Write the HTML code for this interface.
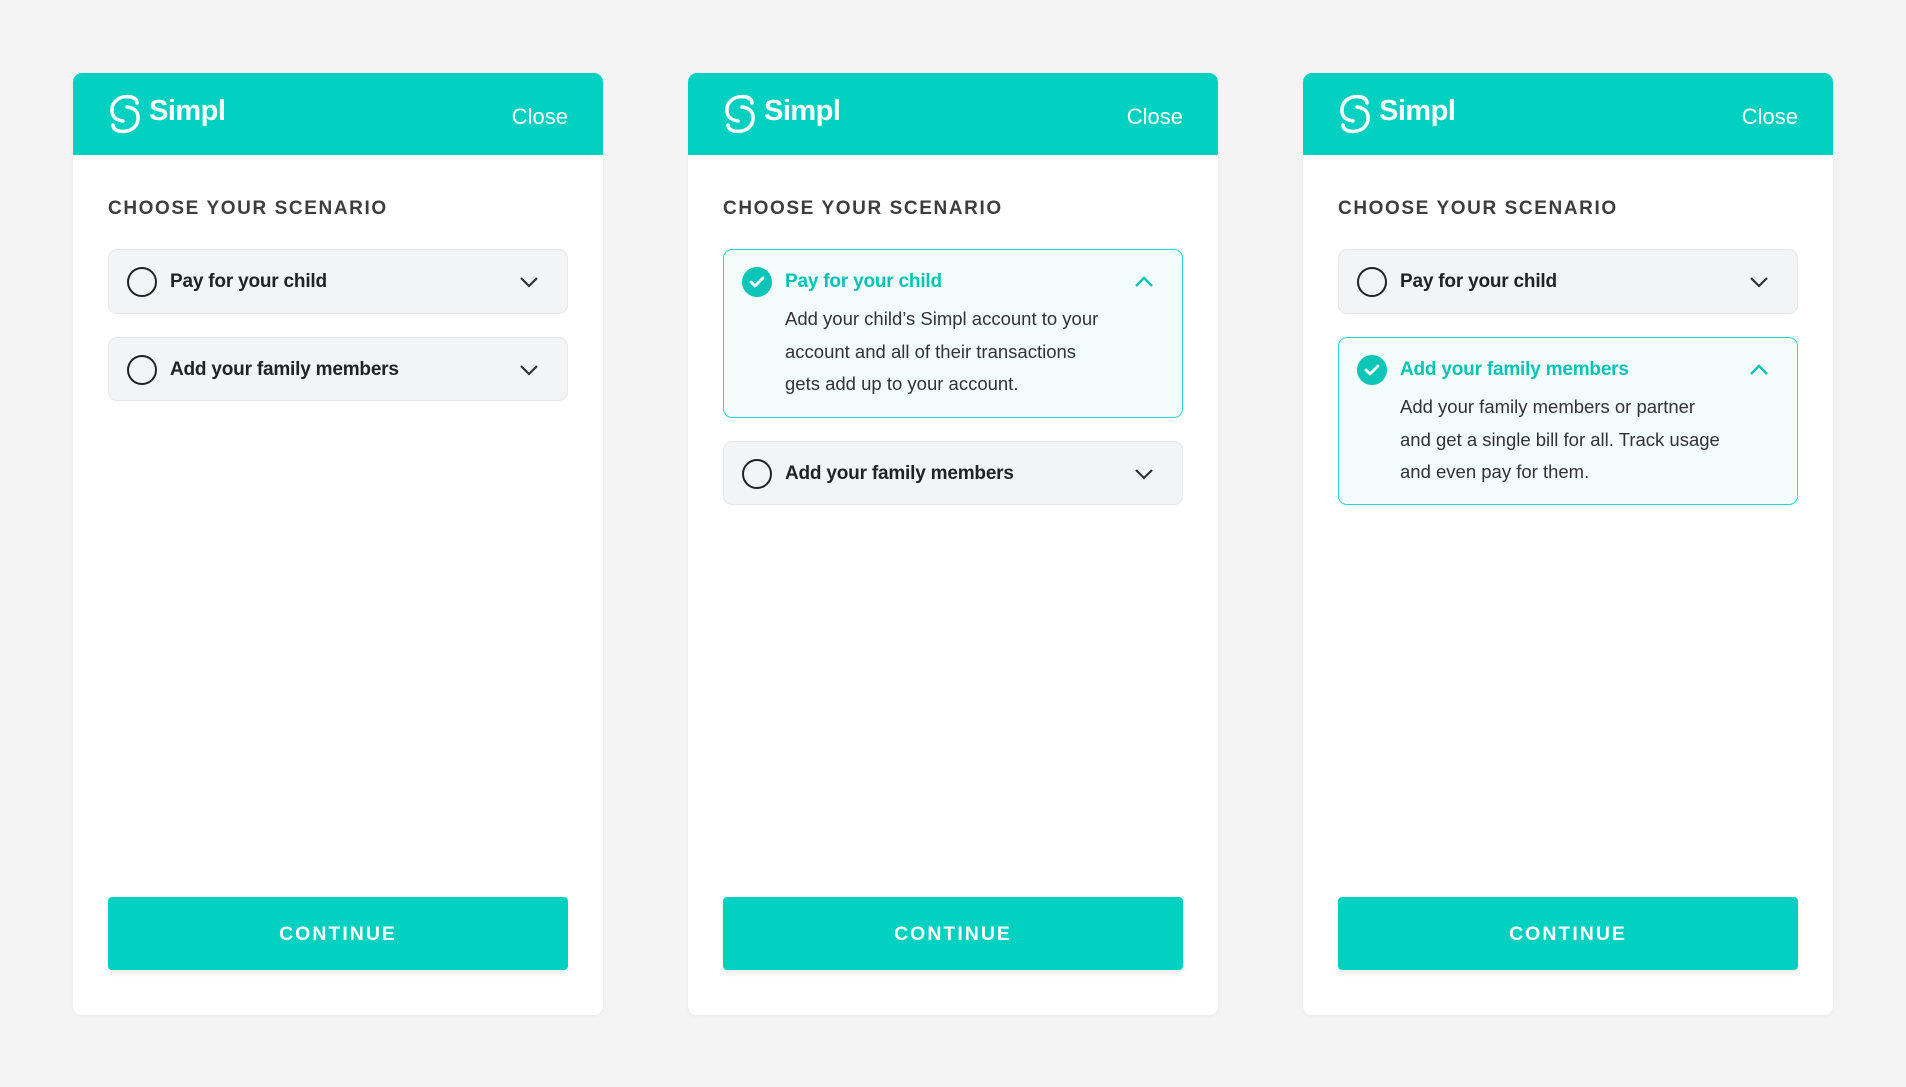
<!DOCTYPE html>
<html><head><style>
*{box-sizing:border-box;margin:0;padding:0}
body{width:1906px;height:1087px;background:#f4f4f5;font-family:"Liberation Sans",sans-serif;position:relative;overflow:hidden}
.card{position:absolute;top:73px;width:530px;height:942px;background:#fff;border-radius:9px;overflow:hidden;box-shadow:0 1px 4px rgba(0,0,0,.04)}
.hd{height:82px;background:#02d1c1;position:relative;color:#fff}
.logo{position:absolute;left:34px;top:19px}
.brand{position:absolute;left:76px;top:22px;font-size:29px;font-weight:bold;letter-spacing:-.5px}
.close{position:absolute;right:35px;top:31px;font-size:22px}
.h{position:absolute;left:35px;top:125px;font-size:19px;letter-spacing:1.6px;color:#3d3d3d;font-weight:bold}
.row{position:absolute;left:35px;width:460px;background:#f3f4f6;border:1px solid #e7e8ea;border-radius:9px}
.row.on{background:#f2fcfb;border:1.5px solid #2ad8cb}
.rad{position:absolute;left:18px;top:17px;width:30px;height:30px;border:2px solid #222;border-radius:50%}
.chk{position:absolute;left:18px;top:17px;width:30px;height:30px;border-radius:50%;background:#0bc5b7}
.lab{position:absolute;left:61px;top:21px;font-size:19px;font-weight:bold;color:#222;white-space:nowrap;letter-spacing:-.2px}
.on .lab{color:#09c3b5}
.chev{position:absolute;right:28px;top:25px}
.desc{position:absolute;left:61px;top:53px;font-size:18.5px;line-height:32.5px;color:#333;width:325px}
.btn{position:absolute;left:35px;top:824px;width:460px;height:73px;background:#02d1c1;border-radius:4px;color:#fff;font-size:19.5px;font-weight:bold;letter-spacing:2px;text-align:center;line-height:75px;box-shadow:0 3px 6px rgba(0,0,0,.08)}
</style></head><body>

<div class="card" style="left:73px">
 <div class="hd">
  <svg class="logo" width="36" height="44" viewBox="0 0 36 44"><g fill="none" stroke="#fff" stroke-width="3.5" stroke-linecap="round"><path d="M24 5C12 3 4 10 5 20c1 6 5 8 11 9"/><path d="M12 39c12 2 20-5 19-15-1-6-5-8-11-9"/><path d="M24 5c4 1 6 3 6 6"/><path d="M12 39c-4-1-6-3-6-6"/></g></svg>
  <div class="brand">Simpl</div><div class="close">Close</div>
 </div>
 <div class="h">CHOOSE YOUR SCENARIO</div>
 <div class="row" style="top:176px;height:65px"><div class="rad"></div><div class="lab">Pay for your child</div>
  <svg class="chev" width="20" height="14" viewBox="0 0 20 14"><path d="M2 3l8 8 8-8" fill="none" stroke="#333" stroke-width="2.2"/></svg></div>
 <div class="row" style="top:264px;height:64px"><div class="rad"></div><div class="lab">Add your family members</div>
  <svg class="chev" width="20" height="14" viewBox="0 0 20 14"><path d="M2 3l8 8 8-8" fill="none" stroke="#333" stroke-width="2.2"/></svg></div>
 <div class="btn">CONTINUE</div>
</div>

<div class="card" style="left:688px">
 <div class="hd">
  <svg class="logo" width="36" height="44" viewBox="0 0 36 44"><g fill="none" stroke="#fff" stroke-width="3.5" stroke-linecap="round"><path d="M24 5C12 3 4 10 5 20c1 6 5 8 11 9"/><path d="M12 39c12 2 20-5 19-15-1-6-5-8-11-9"/><path d="M24 5c4 1 6 3 6 6"/><path d="M12 39c-4-1-6-3-6-6"/></g></svg>
  <div class="brand">Simpl</div><div class="close">Close</div>
 </div>
 <div class="h">CHOOSE YOUR SCENARIO</div>
 <div class="row on" style="top:176px;height:169px"><div class="chk"><svg width="30" height="30" viewBox="0 0 30 30"><path d="M9 15l4 4 8-8" fill="none" stroke="#fff" stroke-width="2.8" stroke-linecap="round" stroke-linejoin="round"/></svg></div><div class="lab">Pay for your child</div>
  <svg class="chev" width="20" height="14" viewBox="0 0 20 14"><path d="M2 11l8-8 8 8" fill="none" stroke="#09c3b5" stroke-width="2.4"/></svg>
  <div class="desc">Add your child’s Simpl account to your account and all of their transactions gets add up to your account.</div></div>
 <div class="row" style="top:368px;height:64px"><div class="rad"></div><div class="lab">Add your family members</div>
  <svg class="chev" width="20" height="14" viewBox="0 0 20 14"><path d="M2 3l8 8 8-8" fill="none" stroke="#333" stroke-width="2.2"/></svg></div>
 <div class="btn">CONTINUE</div>
</div>

<div class="card" style="left:1303px">
 <div class="hd">
  <svg class="logo" width="36" height="44" viewBox="0 0 36 44"><g fill="none" stroke="#fff" stroke-width="3.5" stroke-linecap="round"><path d="M24 5C12 3 4 10 5 20c1 6 5 8 11 9"/><path d="M12 39c12 2 20-5 19-15-1-6-5-8-11-9"/><path d="M24 5c4 1 6 3 6 6"/><path d="M12 39c-4-1-6-3-6-6"/></g></svg>
  <div class="brand">Simpl</div><div class="close">Close</div>
 </div>
 <div class="h">CHOOSE YOUR SCENARIO</div>
 <div class="row" style="top:176px;height:65px"><div class="rad"></div><div class="lab">Pay for your child</div>
  <svg class="chev" width="20" height="14" viewBox="0 0 20 14"><path d="M2 3l8 8 8-8" fill="none" stroke="#333" stroke-width="2.2"/></svg></div>
 <div class="row on" style="top:264px;height:168px"><div class="chk"><svg width="30" height="30" viewBox="0 0 30 30"><path d="M9 15l4 4 8-8" fill="none" stroke="#fff" stroke-width="2.8" stroke-linecap="round" stroke-linejoin="round"/></svg></div><div class="lab">Add your family members</div>
  <svg class="chev" width="20" height="14" viewBox="0 0 20 14"><path d="M2 11l8-8 8 8" fill="none" stroke="#09c3b5" stroke-width="2.4"/></svg>
  <div class="desc">Add your family members or partner and get a single bill for all. Track usage and even pay for them.</div></div>
 <div class="btn">CONTINUE</div>
</div>
</body></html>
